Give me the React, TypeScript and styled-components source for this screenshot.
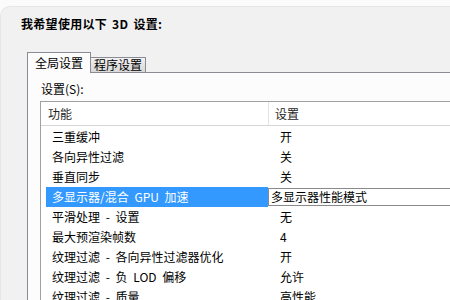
import React from "react";
import styled, { createGlobalStyle } from "styled-components";

const Global = createGlobalStyle`
  html, body { margin: 0; padding: 0; background: #f9f9f9; overflow: hidden; }
  body { font-family: "Noto Sans CJK SC", "Noto Sans", sans-serif; font-size: 12px; color: #000; }
  #root { width: 450px; height: 300px; overflow: hidden; }
`;

const Page = styled.div`
  width: 450px;
  height: 300px;
  padding-top: 6px;
  box-sizing: border-box;
  background: #fbfbfb;
`;

const Frame = styled.div`
  height: 294px;
  box-sizing: border-box;
  background: #f1f1f1;
  border-top: 1px solid #e6e6e6;
  border-left: 1px solid #e6e6e6;
  border-top-left-radius: 10px;
  padding-top: 9px;
  display: flex;
  flex-direction: column;
`;

const Title = styled.div`
  padding-left: 20px;
  font-weight: bold;
  font-size: 12px;
  line-height: 16px;
  height: 16px;
  white-space: pre;
  letter-spacing: 0.3px;
  word-spacing: 2px;
`;

const TabArea = styled.div`
  margin-top: 21px;
  margin-left: 26px;
  display: flex;
  flex-direction: column;
  flex: 1;
`;

const TabStrip = styled.div`
  display: flex;
  align-items: flex-end;
  height: 20px;
  position: relative;
  z-index: 1;
  margin-bottom: -1px;
`;

const Tab = styled.div<{ $active?: boolean }>`
  box-sizing: border-box;
  height: ${(p) => (p.$active ? "21px" : "16px")};
  padding: ${(p) => (p.$active ? "1px 7px 0 7px" : "0 3px 0 3px")};
  width: ${(p) => (p.$active ? "64px" : "55px")};
  border: 1px solid #898c95;
  border-bottom: ${(p) => (p.$active ? "none" : "1px solid #898c95")};
  border-left: ${(p) => (p.$active ? "1px solid #898c95" : "none")};
  background: ${(p) =>
    p.$active ? "#fcfcfc" : "linear-gradient(#f2f2f2, #e3e3e3 50%, #d9d9d9)"};
  line-height: ${(p) => (p.$active ? "17px" : "14px")};
  font-size: 12px;
  white-space: nowrap;
`;

const TabPanel = styled.div`
  flex: 1;
  border-top: 1px solid #898c95;
  border-left: 1px solid #898c95;
  background: #fcfcfc;
  padding-left: 12px;
  display: flex;
  flex-direction: column;
`;

const Label = styled.div`
  margin-top: 8px;
  height: 16px;
  line-height: 16px;
  padding-left: 1px;
  white-space: pre;
`;

const ListView = styled.div`
  margin-top: 4px;
  flex: 1;
  border-top: 1px solid #a0a0a0;
  border-left: 1px solid #a0a0a0;
  background: #fff;
`;

const Header = styled.div`
  display: flex;
  height: 23px;
  border-bottom: 1px solid #d5d5d5;
  margin-bottom: 1px;
`;

const HeaderCell = styled.div<{ $w?: number }>`
  box-sizing: border-box;
  ${(p) => (p.$w ? `width: ${p.$w}px;` : "flex: 1;")}
  padding-left: ${(p) => (p.$w ? "7px" : "6px")};
  line-height: 23px;
  border-right: ${(p) => (p.$w ? "1px solid #e3e3e3" : "none")};
  color: #1e1e1e;
`;

const Row = styled.div`
  display: flex;
  height: 20px;
  margin-left: 5px;
`;

const NameCell = styled.div<{ $sel?: boolean }>`
  width: 222px;
  box-sizing: border-box;
  padding-left: 6px;
  line-height: 20px;
  white-space: pre;
  word-spacing: 3px;
  background: ${(p) => (p.$sel ? "#3399ff" : "transparent")};
  color: ${(p) => (p.$sel ? "#fff" : "#000")};
`;

const ValueCell = styled.div<{ $edit?: boolean }>`
  flex: 1;
  box-sizing: border-box;
  white-space: pre;
  ${(p) =>
    p.$edit
      ? `
    margin-top: 1px;
    height: 18px;
    line-height: 16px;
    border: 1px solid #8a8a8a;
    border-right: none;
    padding-left: 2px;
    background: #fff;
  `
      : `
    line-height: 20px;
    padding-left: 12px;
  `}
`;

const rows: { name: string; value: string; sel?: boolean }[] = [
  { name: "三重缓冲", value: "开" },
  { name: "各向异性过滤", value: "关" },
  { name: "垂直同步", value: "关" },
  { name: "多显示器/混合 GPU 加速", value: "多显示器性能模式", sel: true },
  { name: "平滑处理 - 设置", value: "无" },
  { name: "最大预渲染帧数", value: "4" },
  { name: "纹理过滤 - 各向异性过滤器优化", value: "开" },
  { name: "纹理过滤 - 负 LOD 偏移", value: "允许" },
  { name: "纹理过滤 - 质量", value: "高性能" },
];

export default function App() {
  return (
    <>
      <Global />
      <Page>
        <Frame>
          <Title>我希望使用以下 3D 设置:</Title>
          <TabArea>
            <TabStrip>
              <Tab $active>全局设置</Tab>
              <Tab>程序设置</Tab>
            </TabStrip>
            <TabPanel>
              <Label>设置(S):</Label>
              <ListView>
                <Header>
                  <HeaderCell $w={228}>功能</HeaderCell>
                  <HeaderCell>设置</HeaderCell>
                </Header>
                {rows.map((r) => (
                  <Row key={r.name}>
                    <NameCell $sel={r.sel}>{r.name}</NameCell>
                    <ValueCell $edit={r.sel}>{r.value}</ValueCell>
                  </Row>
                ))}
              </ListView>
            </TabPanel>
          </TabArea>
        </Frame>
      </Page>
    </>
  );
}
